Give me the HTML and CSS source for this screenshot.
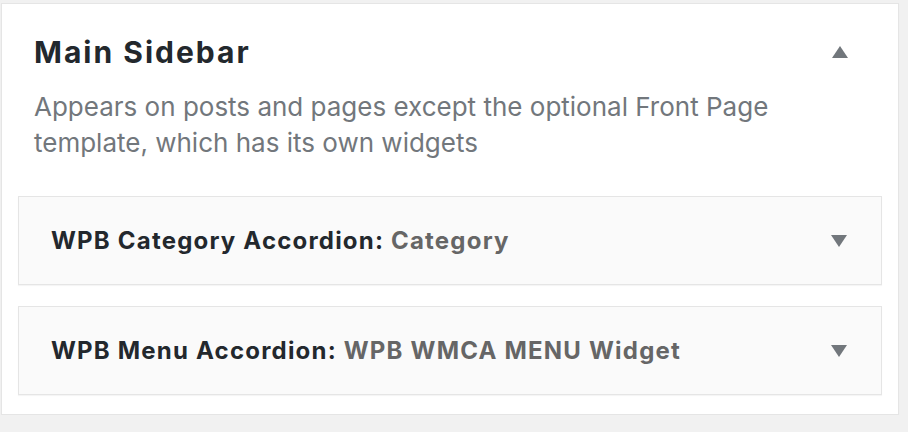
FILE: index.html
```html
<!DOCTYPE html>
<html lang="en">
<head>
  <meta charset="UTF-8">
  <title>Widgets - Main Sidebar</title>
  <link rel="stylesheet" href="styles.css">
</head>
<body>
  <div class="sidebar">
    <div class="sidebar-name">
      <h2>Main Sidebar</h2>
      <span class="arrow up"></span>
    </div>
    <p class="sidebar-description">Appears on posts and pages except the optional Front Page template, which has its own widgets</p>

    <div class="widget">
      <h3>WPB Category Accordion: <span class="in-widget-title">Category</span></h3>
      <span class="arrow down"></span>
    </div>
    <div class="widget">
      <h3>WPB Menu Accordion: <span class="in-widget-title">WPB WMCA MENU Widget</span></h3>
      <span class="arrow down"></span>
    </div>
  </div>
</body>
</html>
```

FILE: styles.css
```css
body {
  margin: 0;
  padding: 3px 9px 0 1px;
  background: #f1f1f1;
  font-family: 'Inter', 'Noto Sans', sans-serif;
  color: #23282d;
}
.sidebar {
  background: #fff;
  border: 1px solid #e5e5e5;
  box-shadow: 0 1px 1px rgba(0,0,0,0.04);
  padding: 30px 16px 19px 16px;
}
.sidebar-name {
  display: flex;
  align-items: center;
  justify-content: space-between;
  padding: 0 34px 0 16px;
}
.sidebar-name h2 {
  margin: 0;
  font-size: 30px;
  line-height: 36px;
  font-weight: 700;
  letter-spacing: 2px;
}
.sidebar-description {
  margin: 19px 0 35px 16px;
  font-size: 26px;
  line-height: 36px;
  color: #72777c;
}
.widget {
  display: flex;
  align-items: center;
  justify-content: space-between;
  height: 87px;
  padding: 0 34px 0 32px;
  background: #fafafa;
  border: 1px solid #e5e5e5;
  box-shadow: 0 1px 1px rgba(0,0,0,0.04);
  margin-bottom: 21px;
}
.widget:last-child {
  margin-bottom: 0;
}
.widget h3 {
  margin: 0;
  font-size: 24px;
  font-weight: 700;
  letter-spacing: 1.2px;
}
.in-widget-title {
  color: #666;
}
.arrow {
  width: 0;
  height: 0;
  border-left: 8px solid transparent;
  border-right: 8px solid transparent;
}
.arrow.up {
  border-bottom: 12px solid #72777c;
}
.arrow.down {
  border-top: 12px solid #72777c;
}
```
